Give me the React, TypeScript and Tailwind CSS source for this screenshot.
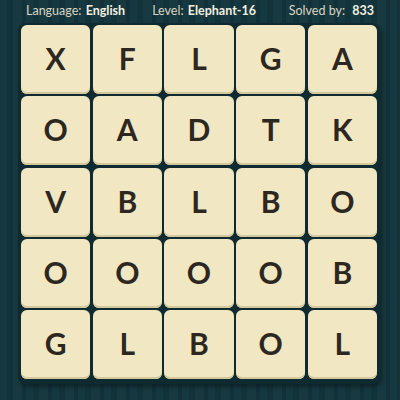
const rows = ["XFLGA", "OADTK", "VBLBO", "OOOOB", "GLBOL"];

export default function App() {
  return (
    <div className="h-[400px] w-[400px] overflow-hidden bg-[repeating-linear-gradient(90deg,#163840_0px,#163840_7px,#13333a_7px,#13333a_13px,#17393f_13px,#17393f_22px,#12313a_22px,#12313a_26px)] font-['Lato',sans-serif]">
      <div className="flex h-[22px] items-center pl-[26px] pr-[26px] text-[12.5px] leading-none text-[#d9d6c3]">
        <span>
          Language: <b className="ml-[1px] font-bold text-[#f3efe0]">English</b>
        </span>
        <span className="ml-[27px]">
          Level: <b className="ml-[1px] font-bold text-[#f3efe0]">Elephant-16</b>
        </span>
        <span className="ml-auto">
          Solved by: <b className="ml-[4px] font-bold text-[#f3efe0]">833</b>
        </span>
      </div>
      <div className="ml-[18px] mt-[1px] w-[362px] rounded-[8px] bg-[#0f2a30] px-[3px] pb-[5px] pt-[2px] shadow-[2px_3px_4px_rgba(0,0,0,0.35)]">
        <div className="grid grid-cols-5 gap-x-[2.5px] gap-y-[2.3px]">
          {rows.flatMap((r, i) =>
            r.split("").map((ch, j) => (
              <div
                key={`${i}-${j}`}
                className="flex h-[69px] items-center justify-center rounded-[6px] bg-[#f1e8c3] pb-[2px] text-[30px] font-bold text-[#2d2721] shadow-[inset_0_-2px_0_#d3c79c]"
              >
                {ch}
              </div>
            ))
          )}
        </div>
      </div>
    </div>
  );
}
